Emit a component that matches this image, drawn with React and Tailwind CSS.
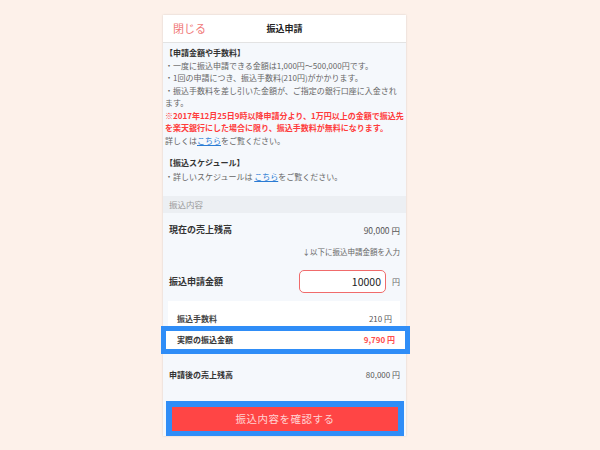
import React from "react";

export default function App() {
  const font = { fontFamily: '"Noto Sans CJK JP", "Noto Sans", sans-serif' };
  return (
    <div className="min-h-[450px] w-[600px] bg-[#fdf1ea] pt-[15px] pl-[163px]" style={font}>
      <div className="w-[243px] h-[421px] bg-[#f5f8fc] shadow-[0_0_2px_rgba(0,0,0,0.15)] flex flex-col">
        <div className="h-[28px] bg-white border-b border-[#e3e3e3] grid grid-cols-[1fr_auto_1fr] items-center px-[10px]">
          <span className="text-[11px] text-[#f07878] leading-none">閉じる</span>
          <span className="text-[9px] font-bold text-[#222] leading-none">振込申請</span>
          <span />
        </div>
        <div className="px-[2px] pt-[4px] pb-[13px] text-[8px] leading-[12.5px] text-[#666] whitespace-nowrap">
          <div className="font-bold text-[#333]">【申請金額や手数料】</div>
          <div>・一度に振込申請できる金額は1,000円〜500,000円です。</div>
          <div>・1回の申請につき、振込手数料(210円)がかかります。</div>
          <div>・振込手数料を差し引いた金額が、ご指定の銀行口座に入金され</div>
          <div>ます。</div>
          <div className="font-bold text-[#ff3b3b]">※2017年12月25日9時以降申請分より、1万円以上の金額で振込先</div>
          <div className="font-bold text-[#ff3b3b]">を楽天銀行にした場合に限り、振込手数料が無料になります。</div>
          <div>
            詳しくは<span className="text-[#2a7bd4] underline">こちら</span>をご覧ください。
          </div>
          <div className="mt-[10px] font-bold text-[#333]">【振込スケジュール】</div>
          <div className="mt-[1px]">
            ・詳しいスケジュールは <span className="text-[#2a7bd4] underline">こちら</span>をご覧ください。
          </div>
        </div>
        <div className="h-[17px] bg-[#eceff3] px-[6px] flex items-center text-[8.5px] text-[#999]">振込内容</div>
        <div className="mt-[11px] px-[6px] flex items-center justify-between leading-[12px]">
          <span className="text-[9px] font-bold text-[#333]">現在の売上残高</span>
          <span className="text-[8.5px] text-[#555]">90,000 円</span>
        </div>
        <div className="mt-[11px] px-[6px] text-right text-[7.5px] leading-[10px] text-[#666]">↓以下に振込申請金額を入力</div>
        <div className="mt-[13px] pl-[6px] pr-[6px] flex items-center">
          <span className="flex-1 text-[9px] font-bold text-[#333]">振込申請金額</span>
          <div className="w-[87px] h-[23px] border-[1.5px] border-[#f06b6b] rounded-[5px] bg-white flex items-center justify-end pr-[4px] text-[10.5px] text-[#222]">
            10000
          </div>
          <span className="ml-[6px] text-[8px] text-[#666]">円</span>
        </div>
        <div className="mt-[8px] ml-[5px] mr-[6px] bg-white">
          <div className="h-[25px] flex items-end justify-between pb-[2px] pl-[9px] pr-[8px] text-[8px] leading-[10px]">
            <span className="font-bold text-[#444]">振込手数料</span>
            <span className="text-[#555]">210 円</span>
          </div>
          <div className="-ml-[7px] -mr-[10px] h-[28px] border-[5px] border-[#2f8df7] bg-white flex items-center justify-between pl-[11px] pr-[10px] text-[8px]">
            <span className="font-bold text-[#333]">実際の振込金額</span>
            <span className="font-bold text-[#ff4d4d]">9,790 円</span>
          </div>
        </div>
        <div className="mt-[16px] px-[6px] flex items-center justify-between text-[8px] leading-[10px]">
          <span className="font-bold text-[#333]">申請後の売上残高</span>
          <span className="text-[#555]">80,000 円</span>
        </div>
        <div className="mt-[21px] ml-[3px] mr-[2px] h-[35px] border-[6px] border-b-[5px] border-[#2f8df7] bg-[#ff4545] flex items-center justify-center text-[10.5px] text-[#ffd3d3] tracking-[0.5px]">
          振込内容を確認する
        </div>
      </div>
    </div>
  );
}
